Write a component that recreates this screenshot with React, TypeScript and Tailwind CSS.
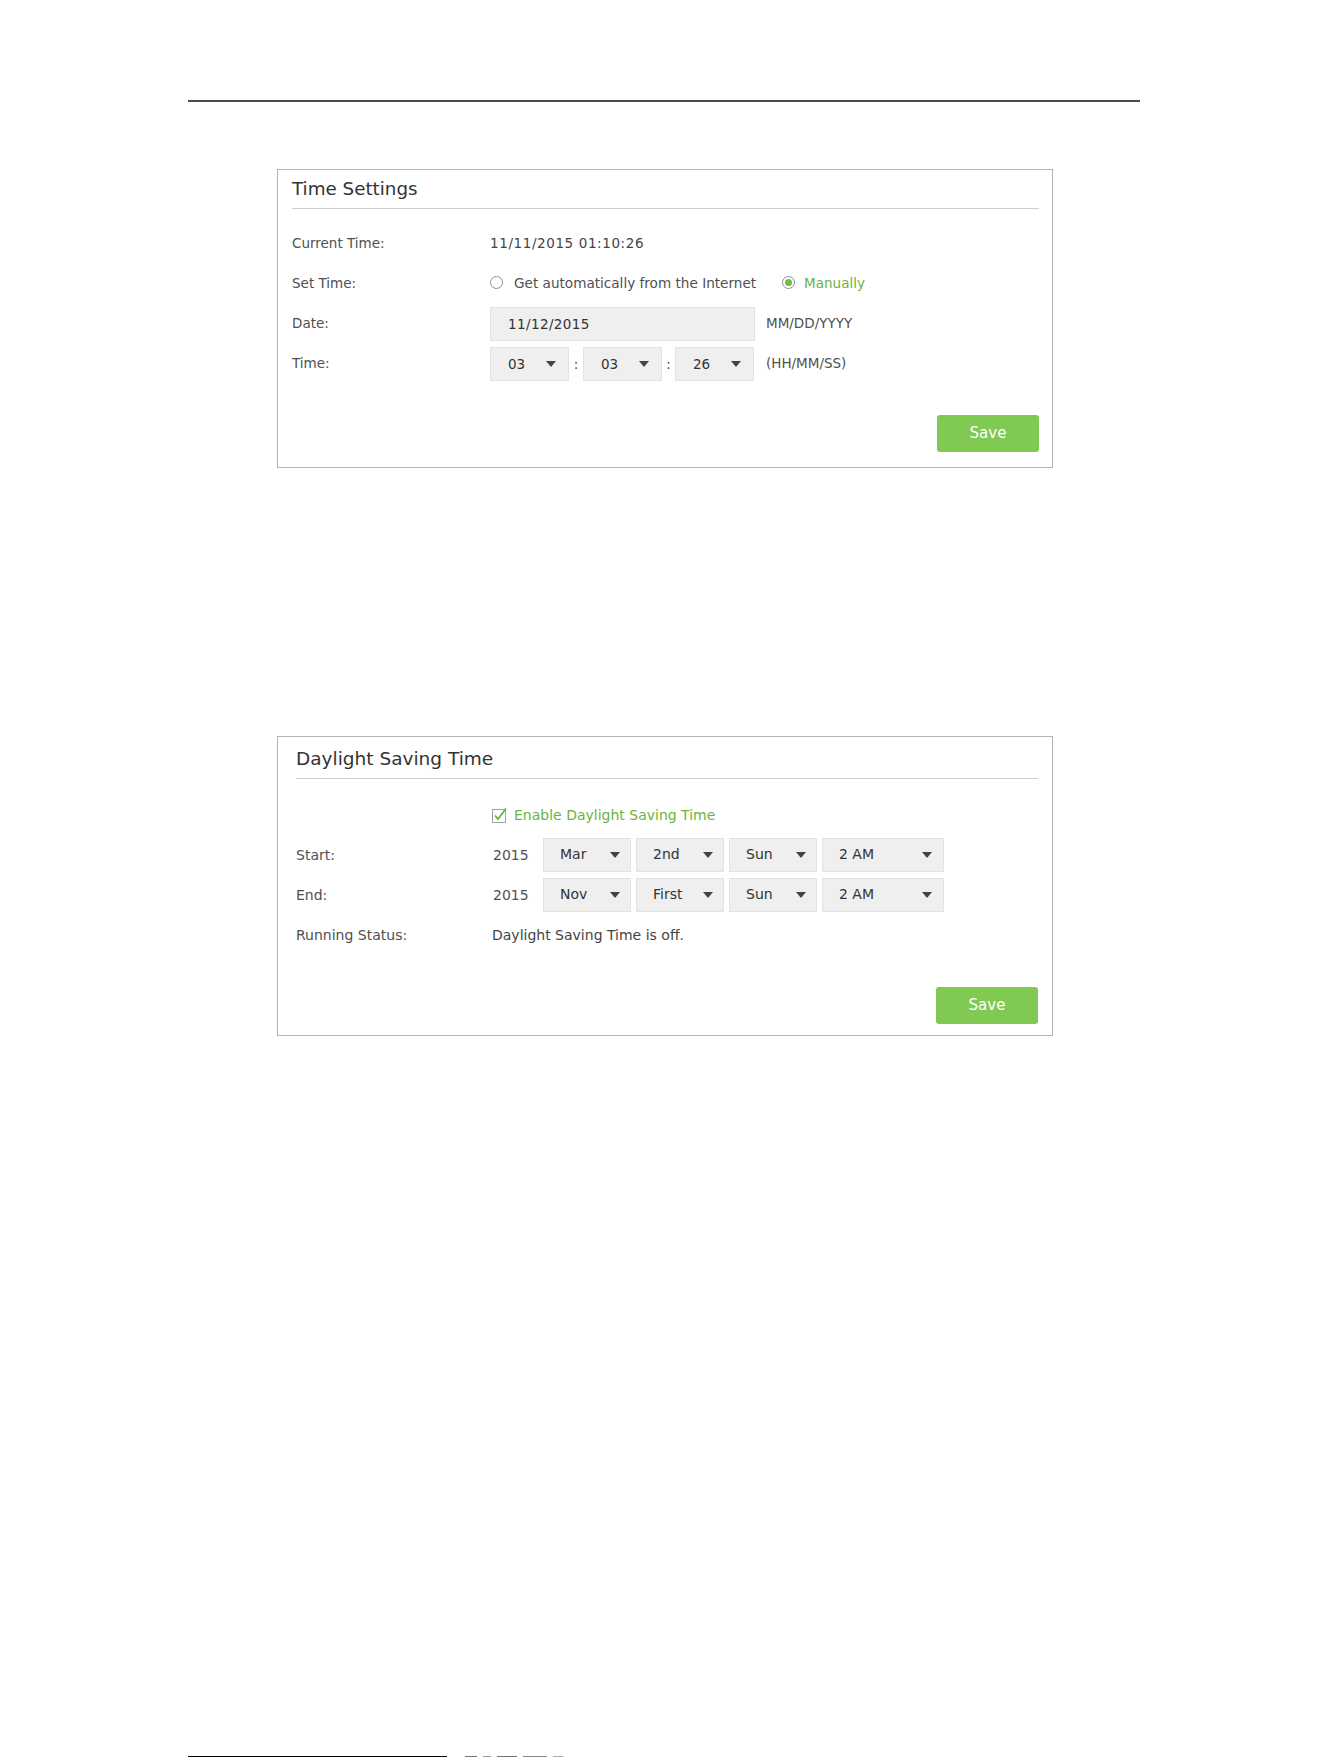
import React from 'react';

// Small drop-down caret used by every select box
function Caret() {
  return (
    <svg width="10" height="6" viewBox="0 0 10 6" className="shrink-0">
      <polygon points="0,0 10,0 5,6" fill="#444" />
    </svg>
  );
}

function Select({ value, width, pl = 'pl-[17px]', pr = 'pr-[12px]' }: { value: string; width: string; pl?: string; pr?: string }) {
  return (
    <div className={`${width} h-[34px] flex items-center justify-between ${pl} ${pr} bg-[#f0efef] border border-[#e2e2e2] text-[#333]`}>
      <span>{value}</span>
      <Caret />
    </div>
  );
}

function Radio({ checked }: { checked?: boolean }) {
  return (
    <span className="w-[13px] h-[13px] rounded-full border border-[#8f8f8f] bg-white flex items-center justify-center shrink-0">
      {checked && <span className="w-[7px] h-[7px] rounded-full bg-[#6cbf3c]" />}
    </span>
  );
}

function Checkbox() {
  return (
    <svg width="16" height="16" viewBox="0 0 16 16" className="shrink-0">
      <rect x="0.5" y="2.5" width="13" height="13" fill="white" stroke="#a3a3a3" />
      <path d="M3 8.5 L6 12 L14 1.5" fill="none" stroke="#6cb33f" strokeWidth="1.8" />
    </svg>
  );
}

function SaveButton() {
  return (
    <button className="w-[102px] h-[37px] rounded-[3px] bg-[#80c953] text-white text-[15px]">
      Save
    </button>
  );
}

export default function App() {
  return (
    <div className="w-[1330px] h-[1758px] overflow-hidden bg-white font-['DejaVu_Sans',sans-serif] text-[13.5px] text-[#505050] pt-[100px]">
      {/* page header rule */}
      <div className="ml-[188px] w-[952px] h-[2px] bg-[#4a4a4a]" />

      {/* Time Settings */}
      <div className="ml-[277px] mt-[67px] w-[776px] h-[299px] border border-[#b3b3b3] flex flex-col pl-[14px] pr-[13px] pt-[7px] pb-[15px]">
        <div className="text-[18.3px] leading-6 text-[#333]">Time Settings</div>
        <div className="mt-[7px] h-px bg-[#cfcfcf]" />

        <div className="mt-[17px] flex flex-col gap-[6px]">
          <div className="flex h-[34px] items-center">
            <div className="w-[198px]">Current Time:</div>
            <div className="text-[#444] tracking-[0.6px]">11/11/2015 01:10:26</div>
          </div>
          <div className="flex h-[34px] items-center">
            <div className="w-[198px]">Set Time:</div>
            <div className="flex items-center">
              <Radio />
              <span className="ml-[11px] text-[13.6px] text-[#505050]">Get automatically from the Internet</span>
              <span className="ml-[26px]"><Radio checked /></span>
              <span className="ml-[9px] text-[#6cb33f]">Manually</span>
            </div>
          </div>
          <div className="flex h-[34px] items-center">
            <div className="w-[198px]">Date:</div>
            <div className="w-[265px] h-[34px] mt-[2px] flex items-center pl-[17px] bg-[#f0efef] border border-[#e2e2e2] text-[#333] tracking-[0.4px]">
              11/12/2015
            </div>
            <div className="ml-[11px]">MM/DD/YYYY</div>
          </div>
          <div className="flex h-[34px] items-center">
            <div className="w-[198px]">Time:</div>
            <div className="flex items-center mt-[2px]">
              <Select value="03" width="w-[79px]" />
              <span className="w-[14px] text-center">:</span>
              <Select value="03" width="w-[79px]" />
              <span className="w-[13px] text-center">:</span>
              <Select value="26" width="w-[79px]" />
            </div>
            <div className="ml-[12px]">(HH/MM/SS)</div>
          </div>
        </div>

        <div className="mt-auto flex justify-end">
          <SaveButton />
        </div>
      </div>

      {/* Daylight Saving Time */}
      <div className="ml-[277px] mt-[268px] w-[776px] h-[300px] border border-[#b3b3b3] flex flex-col pl-[18px] pr-[14px] pt-[10px] pb-[11px] text-[14px]">
        <div className="text-[18.5px] leading-6 text-[#333]">Daylight Saving Time</div>
        <div className="mt-[7px] h-px bg-[#cfcfcf]" />

        <div className="mt-[19px] flex flex-col gap-[6px]">
          <div className="flex h-[34px] items-center">
            <div className="w-[196px]" />
            <div className="flex items-center">
              <Checkbox />
              <span className="ml-[6px] text-[#6cb33f]">Enable Daylight Saving Time</span>
            </div>
          </div>
          <div className="flex h-[34px] items-center">
            <div className="w-[196px]">Start:</div>
            <div className="w-[51px] pl-px">2015</div>
            <div className="flex gap-[5px] items-center -mt-px">
              <Select value="Mar" width="w-[88px]" pl="pl-[16px]" pr="pr-[10px]" />
              <Select value="2nd" width="w-[88px]" pl="pl-[16px]" pr="pr-[10px]" />
              <Select value="Sun" width="w-[88px]" pl="pl-[16px]" pr="pr-[10px]" />
              <Select value="2 AM" width="w-[122px]" pl="pl-[16px]" pr="pr-[11px]" />
            </div>
          </div>
          <div className="flex h-[34px] items-center">
            <div className="w-[196px]">End:</div>
            <div className="w-[51px] pl-px">2015</div>
            <div className="flex gap-[5px] items-center -mt-px">
              <Select value="Nov" width="w-[88px]" pl="pl-[16px]" pr="pr-[10px]" />
              <Select value="First" width="w-[88px]" pl="pl-[16px]" pr="pr-[10px]" />
              <Select value="Sun" width="w-[88px]" pl="pl-[16px]" pr="pr-[10px]" />
              <Select value="2 AM" width="w-[122px]" pl="pl-[16px]" pr="pr-[11px]" />
            </div>
          </div>
          <div className="flex h-[34px] items-center">
            <div className="w-[196px]">Running Status:</div>
            <div className="text-[#444]">Daylight Saving Time is off.</div>
          </div>
        </div>

        <div className="mt-auto flex justify-end">
          <SaveButton />
        </div>
      </div>

      {/* footnote rule at the page foot */}
      <div className="mt-[720px] ml-[188px] flex items-start">
        <div className="w-[259px] h-px bg-black" />
        <div className="ml-[18px] flex gap-[6px]">
          <span className="w-[12px] h-px bg-[#777]" />
          <span className="w-[8px] h-px bg-[#999]" />
          <span className="w-[20px] h-px bg-[#777]" />
          <span className="w-[24px] h-px bg-[#888]" />
          <span className="w-[10px] h-px bg-[#aaa]" />
        </div>
      </div>
    </div>
  );
}
